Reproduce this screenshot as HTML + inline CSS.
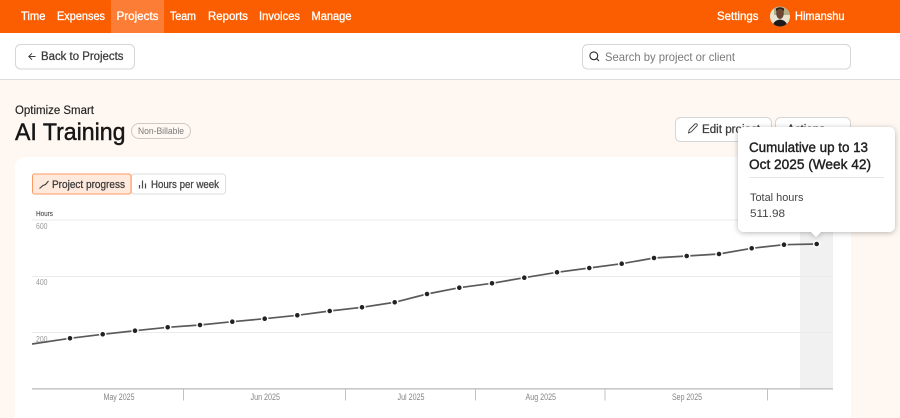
<!DOCTYPE html>
<html lang="en"><head><meta charset="utf-8"><title>AI Training</title>
<style>
html,body{margin:0;padding:0;width:900px;height:418px;overflow:hidden;background:#fff7f1}
svg{display:block}
text{font-family:"Liberation Sans",sans-serif}
.nav{fill:#fff;font-size:12px;stroke:#fff;stroke-width:.32px}
.btn{fill:#3d3d3d;font-size:11.5px;stroke:#3d3d3d;stroke-width:.28px}
.m{fill:#858585;font-size:9px}
.y{fill:#999;font-size:8.5px}
</style></head><body>
<svg width="900" height="418" viewBox="0 0 900 418" xmlns="http://www.w3.org/2000/svg">
<defs>
<filter id="s" x="-20%" y="-20%" width="140%" height="140%"><feDropShadow dx="0" dy="1" stdDeviation="3" flood-color="#000" flood-opacity=".28"/></filter>
<clipPath id="av"><circle cx="780" cy="16.5" r="10"/></clipPath>
</defs>
<rect width="900" height="418" fill="#fff7f1"/>
<!-- top nav -->
<rect width="900" height="33" fill="#fb5e00"/>
<rect x="111" width="53" height="33" fill="#fc7e36"/>
<text class="nav" x="21" y="20" textLength="24.5" lengthAdjust="spacingAndGlyphs">Time</text>
<text class="nav" x="57" y="20" textLength="48" lengthAdjust="spacingAndGlyphs">Expenses</text>
<text class="nav" x="116.5" y="20" textLength="42" lengthAdjust="spacingAndGlyphs">Projects</text>
<text class="nav" x="170" y="20" textLength="26" lengthAdjust="spacingAndGlyphs">Team</text>
<text class="nav" x="208" y="20" textLength="40" lengthAdjust="spacingAndGlyphs">Reports</text>
<text class="nav" x="259" y="20" textLength="41" lengthAdjust="spacingAndGlyphs">Invoices</text>
<text class="nav" x="311.5" y="20" textLength="40" lengthAdjust="spacingAndGlyphs">Manage</text>
<text class="nav" x="717" y="20" textLength="41.5" lengthAdjust="spacingAndGlyphs">Settings</text>
<circle cx="780" cy="16.5" r="10" fill="#e9e4d2"/>
<g clip-path="url(#av)">
<rect x="770" y="6" width="20" height="9" fill="#b3ae88"/>
<rect x="770" y="6" width="4" height="12" fill="#e8e3cf"/>
<ellipse cx="780" cy="13.5" rx="3.8" ry="5.5" fill="#6b4632"/>
<path d="M776 11.5Q780 6 784 11.5L784 8.5Q780 6 776 8.5Z" fill="#2a201b"/>
<path d="M772.5 27Q773 20.5 780 19.5Q787 20.5 787.5 27Z" fill="#1f1b1c"/>
</g>
<text class="nav" x="795" y="20" textLength="49.5" lengthAdjust="spacingAndGlyphs">Himanshu</text>
<!-- sub header -->
<rect y="33" width="900" height="46" fill="#fff"/>
<rect y="79" width="900" height="1" fill="#dcdcdc"/>
<rect x="15.5" y="44.5" width="119" height="24.5" rx="5" fill="#fff" stroke="#d6d6d6"/>
<path d="M35.5 56.5H29M32 53.3L28.8 56.5L32 59.7" fill="none" stroke="#3d3d3d" stroke-width="1"/>
<text class="btn" x="41" y="60" textLength="82.5" lengthAdjust="spacingAndGlyphs">Back to Projects</text>
<rect x="582.5" y="44.5" width="268" height="24.5" rx="5" fill="#fff" stroke="#d6d6d6"/>
<circle cx="593.8" cy="55.8" r="3.9" fill="none" stroke="#2b2b2b" stroke-width="1.1"/>
<path d="M596.7 58.7L599 61" stroke="#2b2b2b" stroke-width="1.1"/>
<text x="605" y="61" font-size="12" fill="#7a7a7a" textLength="130" lengthAdjust="spacingAndGlyphs">Search by project or client</text>
<!-- title -->
<text x="15" y="114" font-size="11.5" fill="#222" stroke="#222" stroke-width=".15" textLength="79" lengthAdjust="spacingAndGlyphs">Optimize Smart</text>
<text x="15" y="140" font-size="24" fill="#161616" stroke="#161616" stroke-width=".45" textLength="110.5" lengthAdjust="spacingAndGlyphs">AI Training</text>
<rect x="131.5" y="123.5" width="59" height="15" rx="7.5" fill="#fff7f1" stroke="#cfc9c4"/>
<text x="138" y="134" font-size="9.5" fill="#7b7b7b" textLength="46" lengthAdjust="spacingAndGlyphs">Non-Billable</text>
<rect x="675.5" y="117.5" width="96" height="24" rx="5" fill="#fff" stroke="#d6d6d6"/>
<path d="M688.5 133L689.3 129.7L695 124Q696.2 123.3 697 124.2Q697.7 125.1 696.8 126L691.2 131.8Z" fill="none" stroke="#3d3d3d" stroke-width=".9"/>
<text class="btn" x="702" y="133" textLength="58" lengthAdjust="spacingAndGlyphs">Edit project</text>
<rect x="775.5" y="117.5" width="75" height="24" rx="5" fill="#fff" stroke="#d6d6d6"/>
<text class="btn" x="787" y="133" textLength="38" lengthAdjust="spacingAndGlyphs">Actions</text>
<!-- card -->
<path d="M15 418V167a10 10 0 0 1 10-10H851V418Z" fill="#fff"/>
<!-- toggle -->
<rect x="131.5" y="174" width="94" height="20" rx="3" fill="#fff" stroke="#dcdcdc"/>
<rect x="32.5" y="174" width="98.5" height="20" rx="2" fill="#ffe9dc" stroke="#fb9a63"/>
<path d="M39.5 188.5L43 185.5L45.5 184.5L48.5 181" fill="none" stroke="#3a3a3a" stroke-width="1.1"/>
<text class="btn" x="52" y="188" textLength="73" lengthAdjust="spacingAndGlyphs" style="font-size:11px">Project progress</text>
<path d="M139.5 188.5V185M142.5 188.5V180.5M145.5 188.5V183.5" fill="none" stroke="#4a4a4a" stroke-width="1.2"/>
<text class="btn" x="151" y="188" textLength="68" lengthAdjust="spacingAndGlyphs" style="font-size:11px;fill:#444;stroke:#444">Hours per week</text>
<!-- chart -->
<text x="36" y="216" font-size="7" fill="#555" stroke="#555" stroke-width=".15" textLength="17" lengthAdjust="spacingAndGlyphs">Hours</text>
<rect x="800" y="220" width="33" height="168" fill="#f1f1f1"/>
<path d="M32 220H833M32 276.5H833M32 332.5H833" stroke="#ebebeb" stroke-width="1" fill="none"/>
<text class="y" x="36" y="229" textLength="11.5" lengthAdjust="spacingAndGlyphs">600</text>
<text class="y" x="36" y="285" textLength="11.5" lengthAdjust="spacingAndGlyphs">400</text>
<rect x="34" y="334" width="15" height="9" fill="#fff"/>
<text class="y" x="36" y="342" textLength="11.5" lengthAdjust="spacingAndGlyphs">200</text>
<rect x="32" y="388" width="801" height="1.6" fill="#c8c8c8"/>
<path d="M183.5 389V400.5M345.5 389V400.5M475.5 389V400.5M605 389V400.5M767.5 389V400.5" stroke="#b5b5b5" stroke-width=".8" fill="none"/>
<text class="m" x="103.5" y="400" textLength="31" lengthAdjust="spacingAndGlyphs">May 2025</text>
<text class="m" x="250.5" y="400" textLength="29.5" lengthAdjust="spacingAndGlyphs">Jun 2025</text>
<text class="m" x="397.5" y="400" textLength="27" lengthAdjust="spacingAndGlyphs">Jul 2025</text>
<text class="m" x="525.5" y="400" textLength="30.5" lengthAdjust="spacingAndGlyphs">Aug 2025</text>
<text class="m" x="672" y="400" textLength="30" lengthAdjust="spacingAndGlyphs">Sep 2025</text>
<polyline points="32,344 70,338.3 102.7,334.3 135,330.7 167.7,327.3 200,325 232.3,321.7 264.7,318.7 297.3,315.3 329.7,311 362,307.3 394.7,302.3 427,294 459.3,287.7 492,283.3 524.3,277.7 557,272.3 589.3,268 621.7,263.7 654,258 686.7,256 719,254 751.7,248.3 784,244.7 816.7,244" fill="none" stroke="#5a5a5a" stroke-width="1.7"/>
<g fill="#222" stroke="#fff" stroke-width="1.4">
<circle cx="70" cy="338.3" r="3"/><circle cx="102.7" cy="334.3" r="3"/><circle cx="135" cy="330.7" r="3"/><circle cx="167.7" cy="327.3" r="3"/><circle cx="200" cy="325" r="3"/><circle cx="232.3" cy="321.7" r="3"/><circle cx="264.7" cy="318.7" r="3"/><circle cx="297.3" cy="315.3" r="3"/><circle cx="329.7" cy="311" r="3"/><circle cx="362" cy="307.3" r="3"/><circle cx="394.7" cy="302.3" r="3"/><circle cx="427" cy="294" r="3"/><circle cx="459.3" cy="287.7" r="3"/><circle cx="492" cy="283.3" r="3"/><circle cx="524.3" cy="277.7" r="3"/><circle cx="557" cy="272.3" r="3"/><circle cx="589.3" cy="268" r="3"/><circle cx="621.7" cy="263.7" r="3"/><circle cx="654" cy="258" r="3"/><circle cx="686.7" cy="256" r="3"/><circle cx="719" cy="254" r="3"/><circle cx="751.7" cy="248.3" r="3"/><circle cx="784" cy="244.7" r="3"/><circle cx="816.7" cy="244" r="3"/>
</g>
<!-- tooltip -->
<path filter="url(#s)" d="M744 127H889a6 6 0 0 1 6 6V226a6 6 0 0 1-6 6H821L816 237L811 232H744a6 6 0 0 1-6-6V133a6 6 0 0 1 6-6Z" fill="#fff"/>
<text x="749" y="152" font-size="13.5" fill="#1f1f1f" textLength="119" lengthAdjust="spacingAndGlyphs" stroke="#1f1f1f" stroke-width=".4">Cumulative up to 13</text>
<text x="749" y="169" font-size="13.5" fill="#1f1f1f" textLength="122" lengthAdjust="spacingAndGlyphs" stroke="#1f1f1f" stroke-width=".4">Oct 2025 (Week 42)</text>
<rect x="749" y="177" width="135" height="1" fill="#e6e6e6"/>
<text x="750" y="201" font-size="11" fill="#444" textLength="53.5" lengthAdjust="spacingAndGlyphs">Total hours</text>
<text x="750" y="217" font-size="11" fill="#444" textLength="35" lengthAdjust="spacingAndGlyphs">511.98</text>
</svg>
</body></html>
